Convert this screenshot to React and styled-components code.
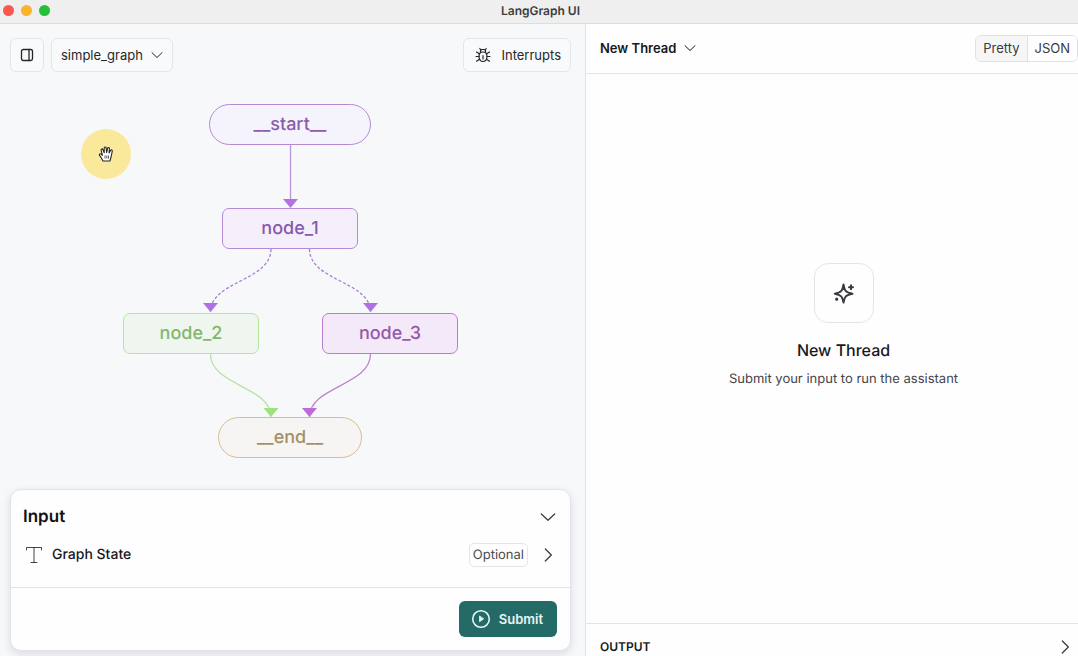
import React from "react";
import styled, { createGlobalStyle, css } from "styled-components";

const GlobalStyle = createGlobalStyle`
  *, *::before, *::after { box-sizing: border-box; }
  body {
    margin: 0;
    font-family: Inter, "Liberation Sans", sans-serif;
    text-rendering: geometricPrecision;
    color: #18181b;
    background: #fefefe;
  }
  h1, h2, p { margin: 0; }
  button { font: inherit; color: inherit; cursor: pointer; }
`;

const Window = styled.div`
  display: flex;
  flex-direction: column;
  height: 100vh;
  overflow: hidden;
`;

const TitleBar = styled.header`
  display: grid;
  grid-template-columns: 1fr auto 1fr;
  align-items: center;
  height: 24px;
  padding: 0 0 2px 3px;
  background: #eeefee;
  border-bottom: 1px solid #dcdedd;
`;

const TrafficLights = styled.div`
  display: flex;
  gap: 7px;
`;

const Light = styled.span`
  width: 11px;
  height: 11px;
  border-radius: 50%;
  background: ${(p) => p.$color};
`;

const WindowTitle = styled.h1`
  font-size: 12px;
  line-height: 16px;
  font-weight: 600;
  color: #3d3e3e;
`;

const Panes = styled.main`
  flex: 1;
  min-height: 0;
  display: grid;
  grid-template-columns: minmax(0, 586fr) minmax(0, 492fr);
`;

const GraphPane = styled.section`
  display: flex;
  flex-direction: column;
  min-height: 0;
  padding: 14px 14px 5px 10px;
  background: #f7f8fa;
  border-right: 1px solid #e1e5ea;
`;

const Toolbar = styled.div`
  display: flex;
  align-items: center;
  gap: 7px;
`;

const ToolButton = styled.button`
  display: flex;
  align-items: center;
  gap: 8px;
  height: 34px;
  padding: 0 ${(p) => (p.$square ? 8 : 9)}px;
  border: 1px solid #e3e5e8;
  border-radius: 6px;
  background: #f9fafb;
  font-size: 13px;
  line-height: 20px;
  color: #27272a;
`;

const Spacer = styled.div`
  flex: 1;
`;

const Canvas = styled.div`
  position: relative;
  flex: 1;
  display: flex;
  align-items: flex-start;
  justify-content: center;
  padding-top: 32px;
`;

const Graph = styled.div`
  position: relative;
  width: 335px;
  height: 354px;
`;

const Edges = styled.svg`
  position: absolute;
  inset: 0;
  width: 100%;
  height: 100%;
`;

const Node = styled.div`
  position: absolute;
  left: ${(p) => p.$x}px;
  top: ${(p) => p.$y}px;
  width: ${(p) => p.$w}px;
  height: 41px;
  display: flex;
  align-items: center;
  justify-content: center;
  border: 1px solid ${(p) => p.$line};
  border-radius: ${(p) => (p.$round ? 21 : 7)}px;
  background: ${(p) => p.$fill};
  color: ${(p) => p.$ink};
  font-size: 18px;
  line-height: 24px;
  font-weight: 500;
`;

const Pointer = styled.div`
  position: absolute;
  left: 71px;
  top: 57px;
  width: 50px;
  height: 50px;
  display: flex;
  align-items: center;
  justify-content: center;
  border-radius: 50%;
  background: #fae89b;
`;

const Card = styled.form`
  border: 1px solid #e2e4e7;
  border-radius: 11px;
  background: #fefefe;
  box-shadow: 0 3px 8px rgba(30, 40, 60, 0.13);
`;

const CardBody = styled.div`
  display: flex;
  flex-direction: column;
  gap: 12px;
  padding: 14px 14px 19px 12px;
`;

const CardRow = styled.div`
  display: flex;
  align-items: center;
  height: 26px;
`;

const CardTitle = styled.h2`
  flex: 1;
  font-size: 17px;
  line-height: 24px;
  font-weight: 600;
  color: #111113;
`;

const FieldName = styled.span`
  flex: 1;
  padding-left: 7px;
  font-size: 14px;
  line-height: 20px;
  font-weight: 500;
`;

const Tag = styled.span`
  margin-right: 12px;
  padding: 1px 3px;
  border: 1px solid #e4e5e8;
  border-radius: 5px;
  font-size: 13px;
  line-height: 20px;
  color: #4b4b50;
`;

const IconButton = styled.button`
  display: flex;
  padding: 0;
  border: 0;
  background: none;
  color: #3f3f46;
`;

const CardFooter = styled.div`
  display: flex;
  justify-content: flex-end;
  padding: 13px;
  border-top: 1px solid #e4e5e8;
`;

const SubmitButton = styled.button`
  display: flex;
  align-items: center;
  gap: 8px;
  height: 36px;
  padding: 0 14px 0 12px;
  border: 0;
  border-radius: 6px;
  background: #246b67;
  color: #e9f5f3;
  font-size: 13px;
  line-height: 20px;
  font-weight: 600;
`;

const ThreadPane = styled.section`
  display: flex;
  flex-direction: column;
  min-height: 0;
`;

const ThreadHeader = styled.div`
  display: flex;
  align-items: center;
  justify-content: space-between;
  height: 50px;
  padding: 0 0 1px 14px;
  border-bottom: 1px solid #e4e5e8;
`;

const ThreadPicker = styled.button`
  display: flex;
  align-items: center;
  gap: 8px;
  padding: 0;
  border: 0;
  background: none;
  font-size: 13px;
  line-height: 20px;
  font-weight: 600;
`;

const Segments = styled.div`
  display: flex;
  border: 1px solid #e0e1e4;
  border-radius: 6px;
  overflow: hidden;
`;

const Segment = styled.button`
  height: 25px;
  padding: 0 7px;
  border: 0;
  background: #fefefe;
  font-size: 13px;
  line-height: 20px;
  color: #3a3a3f;
  & + & { border-left: 1px solid #e0e1e4; }
  ${(p) => p.$active && css`background: #f6f6f7;`}
`;

const EmptyState = styled.div`
  flex: 1;
  display: flex;
  flex-direction: column;
  align-items: center;
  justify-content: center;
  padding: 0 0 46px 23px;
`;

const SparkBox = styled.div`
  display: flex;
  align-items: center;
  justify-content: center;
  width: 60px;
  height: 60px;
  border: 1px solid #e4e5e8;
  border-radius: 14px;
  color: #3a3a43;
`;

const EmptyTitle = styled.h2`
  margin-top: 15px;
  font-size: 16px;
  line-height: 24px;
  font-weight: 500;
`;

const EmptyText = styled.p`
  margin-top: 7px;
  font-size: 13px;
  line-height: 20px;
  color: #45454c;
`;

const OutputBar = styled.div`
  display: flex;
  align-items: center;
  justify-content: space-between;
  height: 33px;
  padding: 13px 5px 0 14px;
  border-top: 1px solid #e4e5e8;
`;

const OutputTitle = styled.h2`
  font-size: 12px;
  line-height: 20px;
  font-weight: 600;
`;

const Icon = ({ size = 16, box = 16, width = 1, children }) => (
  <svg
    width={size}
    height={size}
    viewBox={`0 0 ${box} ${box}`}
    fill="none"
    stroke="currentColor"
    strokeWidth={width}
    strokeLinecap="round"
    strokeLinejoin="round"
    aria-hidden="true"
  >
    {children}
  </svg>
);

const Chevron = ({ right, size = 12 }) => (
  <Icon size={size} box={12}>
    <path d={right ? "M4 1.5 8.5 6 4 10.5" : "M1 3.7 6 8.5 11 3.7"} />
  </Icon>
);

const nodes = [
  { id: "__start__", x: 86, y: 0, w: 162, round: true, line: "#b58ad2", fill: "#f5f3fb", ink: "#8a5cab" },
  { id: "node_1", x: 99, y: 104, w: 136, line: "#b48ad8", fill: "#f4effb", ink: "#8659b0" },
  { id: "node_2", x: 0, y: 209, w: 136, line: "#b4e69b", fill: "#eff6f0", ink: "#82b86c" },
  { id: "node_3", x: 199, y: 209, w: 136, line: "#bb7dcd", fill: "#f4e9f8", ink: "#9759ab" },
  { id: "__end__", x: 95, y: 313, w: 144, round: true, line: "#d6bd8c", fill: "#f6f5f4", ink: "#a68f65" },
];

const edges = [
  { d: "M167.5 41V96", tip: [167.5, 104], line: "#bb95da", head: "#b273e0" },
  { d: "M148 145C148 177 87.5 177 87.5 208", tip: [87.5, 208], line: "#a97fd0", head: "#ac72e3", dashed: true },
  { d: "M186.5 145C186.5 177 247.5 177 247.5 208", tip: [247.5, 208], line: "#a97fd0", head: "#ac72e3", dashed: true },
  { d: "M87.5 250C87.5 282 148 282 148 313", tip: [148, 313], line: "#b9e3a4", head: "#9ee27c" },
  { d: "M247.5 250C247.5 282 186.5 282 186.5 313", tip: [186.5, 313], line: "#bf83cf", head: "#c06ada" },
];

export default function App() {
  return (
    <Window>
      <GlobalStyle />
      <TitleBar>
        <TrafficLights>
          <Light $color="#fc5650" />
          <Light $color="#fdb22b" />
          <Light $color="#24c138" />
        </TrafficLights>
        <WindowTitle>LangGraph UI</WindowTitle>
      </TitleBar>
      <Panes>
        <GraphPane>
          <Toolbar>
            <ToolButton type="button" $square aria-label="Toggle panel">
              <Icon width={1.3}>
                <rect x="2.5" y="2.5" width="11" height="11" rx="1.8" />
                <path d="M10 2.5v11" />
              </Icon>
            </ToolButton>
            <ToolButton type="button">
              simple_graph
              <Chevron />
            </ToolButton>
            <Spacer />
            <ToolButton type="button">
              <Icon size={20} box={20} width={1.2}>
                <path d="M10 7c3 0 4 1.800 4 4.500s-1.600 5-4 5-4-2.300-4-5S7 7 10 7z" />
                <path d="M7.500 7.300V5.500L8.500 4.500h3l1 1v1.800M10 10.500v3.500M7.500 4.500 6.800 3.500M12.500 4.500l.7-1M3 11.500h3M14 11.500h3M3.500 7l2.800 1.800M16.500 7l-2.800 1.800M3.500 16.200l3-2M16.500 16.200l-3-2" />
              </Icon>
              Interrupts
            </ToolButton>
          </Toolbar>
          <Canvas>
            <Graph>
              <Edges>
                {edges.map(({ d, tip: [x, y], line, head, dashed }) => (
                  <g key={d}>
                    <path d={d} fill="none" stroke={line} strokeWidth="1.3" strokeDasharray={dashed ? "3 2" : undefined} />
                    <path d={`M${x - 7.5} ${y - 9}h15L${x} ${y}z`} fill={head} />
                  </g>
                ))}
              </Edges>
              {nodes.map((n) => (
                <Node key={n.id} $x={n.x} $y={n.y} $w={n.w} $round={n.round} $line={n.line} $fill={n.fill} $ink={n.ink}>
                  {n.id}
                </Node>
              ))}
            </Graph>
            <Pointer>
              <svg width="16" height="16" viewBox="0 0 16 16" aria-hidden="true">
                <path
                  d="M5 15 3.400 12 1.600 9.400C.9 8.200 2.200 7.300 3.200 8.200L4.400 9.400 3.100 4.200C2.800 2.800 4.400 2.400 4.900 3.600L6.200 6.800 6.200 2.100C6.200.7 8 .7 8.200 2L8.600 6.500 9.600 2.300C10 1.100 11.500 1.400 11.400 2.700L11.100 7 12.500 4.500C13.200 3.400 14.600 4 14.200 5.300L13.400 9.500C13.100 11.500 12.300 13 12 15z"
                  fill="#fff"
                  stroke="#222"
                  strokeWidth="1.1"
                  strokeLinejoin="round"
                />
                <path d="M7 9.500v3M8.800 9.500v3M10.500 9.500v3" stroke="#333" strokeWidth=".8" />
              </svg>
            </Pointer>
          </Canvas>
          <Card onSubmit={(e) => e.preventDefault()}>
            <CardBody>
              <CardRow>
                <CardTitle>Input</CardTitle>
                <IconButton type="button" aria-label="Collapse input">
                  <Chevron size={16} />
                </IconButton>
              </CardRow>
              <CardRow>
                <Icon size={22} box={22}>
                  <path d="M3.500 6V3.500h15V6M11 3.500v15M8 18.500h6" opacity=".8" />
                </Icon>
                <FieldName>Graph State</FieldName>
                <Tag>Optional</Tag>
                <IconButton type="button" aria-label="Expand graph state">
                  <Chevron right size={16} />
                </IconButton>
              </CardRow>
            </CardBody>
            <CardFooter>
              <SubmitButton type="submit">
                <Icon size={20} box={20} width={1.6}>
                  <circle cx="10" cy="10" r="8.3" />
                  <path d="M8.500 7.300v5.400l4-2.700z" fill="currentColor" strokeWidth=".8" />
                </Icon>
                Submit
              </SubmitButton>
            </CardFooter>
          </Card>
        </GraphPane>
        <ThreadPane>
          <ThreadHeader>
            <ThreadPicker type="button">
              New Thread
              <Chevron />
            </ThreadPicker>
            <Segments>
              <Segment type="button" $active>Pretty</Segment>
              <Segment type="button">JSON</Segment>
            </Segments>
          </ThreadHeader>
          <EmptyState>
            <SparkBox>
              <Icon size={24} box={24} width={2}>
                <path d="M11.500 3.500C12.300 9.500 13.500 11.300 20.500 12.700 13.800 14 12.500 15.700 11.500 21.500 10.500 15.700 9.200 14 2.800 12.700 9.500 11.300 10.700 9.500 11.500 3.500z" />
                <path d="M19 4.200v4M17 6.200h4M4.700 18.200h.1" />
                <circle cx="4.700" cy="18.200" r=".6" />
              </Icon>
            </SparkBox>
            <EmptyTitle>New Thread</EmptyTitle>
            <EmptyText>Submit your input to run the assistant</EmptyText>
          </EmptyState>
          <OutputBar>
            <OutputTitle>OUTPUT</OutputTitle>
            <IconButton type="button" aria-label="Expand output">
              <Chevron right size={16} />
            </IconButton>
          </OutputBar>
        </ThreadPane>
      </Panes>
    </Window>
  );
}
